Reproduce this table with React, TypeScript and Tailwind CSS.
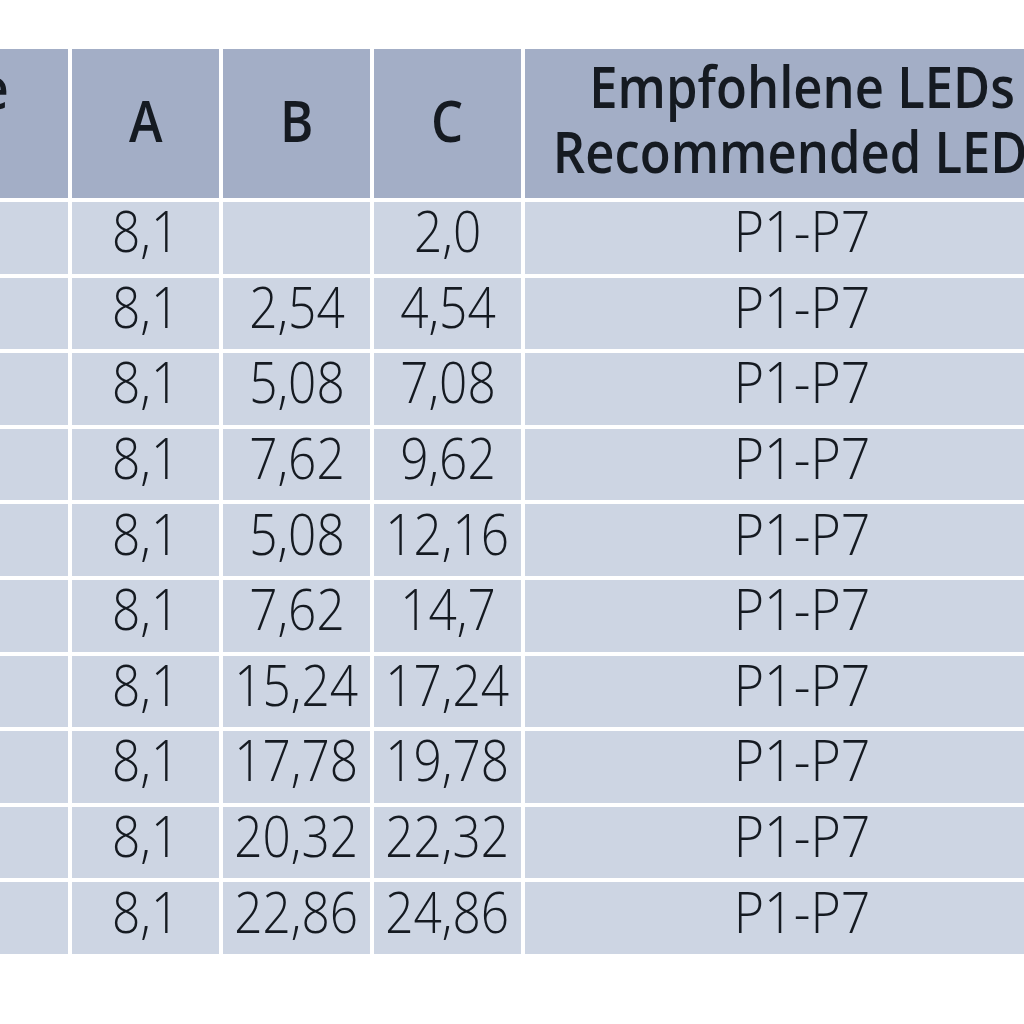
import React from "react";

const rows: [string, string, string][] = [
  ["8,1", "", "2,0"],
  ["8,1", "2,54", "4,54"],
  ["8,1", "5,08", "7,08"],
  ["8,1", "7,62", "9,62"],
  ["8,1", "5,08", "12,16"],
  ["8,1", "7,62", "14,7"],
  ["8,1", "15,24", "17,24"],
  ["8,1", "17,78", "19,78"],
  ["8,1", "20,32", "22,32"],
  ["8,1", "22,86", "24,86"],
];

const font = { fontFamily: '"Open Sans", "Noto Sans", sans-serif' };

function Num({ v }: { v: string }) {
  return <span className="inline-block scale-x-[0.87] whitespace-nowrap">{v}</span>;
}

export default function App() {
  return (
    <div className="w-[1024px] h-[1024px] overflow-hidden bg-white" style={font}>
      <div className="pt-[49px] ml-[-166px] flex flex-col gap-[4px] text-[#151a21]">
        <div className="flex gap-[4px] h-[149px] font-semibold text-[57px] leading-[65px]">
          <div className="w-[234px] shrink-0 bg-[#a3aec6] flex flex-col items-center justify-center pb-[8px]">
            <span className="inline-block scale-x-[0.89]">Type</span>
            <span className="inline-block scale-x-[0.89]">Typ</span>
          </div>
          <div className="w-[147px] shrink-0 bg-[#a3aec6] flex items-center justify-center pb-[6px]">
            <span className="inline-block scale-x-[0.89]">A</span>
          </div>
          <div className="w-[147px] shrink-0 bg-[#a3aec6] flex items-center justify-center pb-[6px]">
            <span className="inline-block scale-x-[0.89]">B</span>
          </div>
          <div className="w-[147px] shrink-0 bg-[#a3aec6] flex items-center justify-center pb-[6px]">
            <span className="inline-block scale-x-[0.89]">C</span>
          </div>
          <div className="w-[555px] shrink-0 bg-[#a3aec6] flex flex-col items-center justify-center whitespace-nowrap pb-[10px]">
            <span className="inline-block scale-x-[0.89]">Empfohlene LEDs</span>
            <span className="inline-block scale-x-[0.89]">Recommended LEDs</span>
          </div>
        </div>
        {rows.map((r, i) => (
          <div key={i} className="flex gap-[4px] h-[71.6px] font-[350] text-[57px] leading-none">
            <div className="w-[234px] shrink-0 bg-[#cdd5e3]" />
            <div className="w-[147px] shrink-0 bg-[#cdd5e3] flex items-center justify-center pb-[14px]">
              <Num v={r[0]} />
            </div>
            <div className="w-[147px] shrink-0 bg-[#cdd5e3] flex items-center justify-center pb-[14px]">
              <Num v={r[1]} />
            </div>
            <div className="w-[147px] shrink-0 bg-[#cdd5e3] flex items-center justify-center pb-[14px]">
              <Num v={r[2]} />
            </div>
            <div className="w-[555px] shrink-0 bg-[#cdd5e3] flex items-center justify-center pb-[14px]">
              <span className="inline-block scale-x-[0.91]">P1-P7</span>
            </div>
          </div>
        ))}
      </div>
    </div>
  );
}
